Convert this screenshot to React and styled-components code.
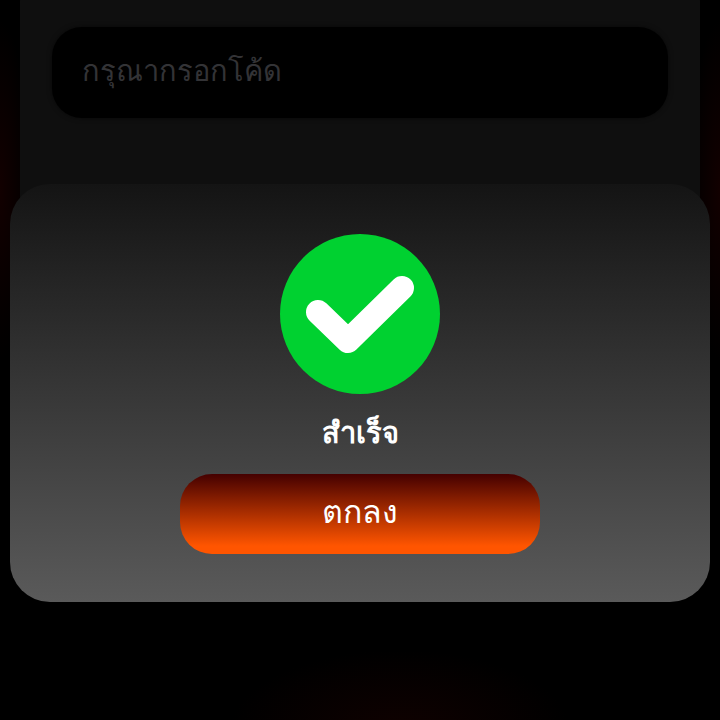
import React from 'react';
import styled, {createGlobalStyle} from 'styled-components';

const GlobalStyle = createGlobalStyle`
    html, body {
        margin: 0;
        padding: 0;
        background: #000;
    }
    body {
        font-family: "Noto Sans", "Open Sans", "DejaVu Sans", sans-serif;
    }
`

function App() {
    return (
        <Page>
            <GlobalStyle />
            <Panel>
                <CodeInput placeholder="กรุณากรอกโค้ด" readOnly />
            </Panel>
            <Dialog>
                <CheckCircle>
                    <svg width="160" height="160" viewBox="0 0 160 160">
                        <path d="M38 78 L68 107 L122 54" fill="none" stroke="#fff" strokeWidth="24" strokeLinecap="round" strokeLinejoin="round" />
                    </svg>
                </CheckCircle>
                <Title>สำเร็จ</Title>
                <OkButton>ตกลง</OkButton>
            </Dialog>
        </Page>
    );
}

const Page = styled.div`
    position: relative;
    width: 720px;
    height: 720px;
    overflow: hidden;
    box-sizing: border-box;
    padding: 0 20px;
    background:
        radial-gradient(ellipse 170px 80px at 400px 730px, #0f0100 0%, rgba(15, 1, 0, 0) 100%),
        radial-gradient(ellipse 30px 170px at 0px 190px, #120000 0%, rgba(18, 0, 0, 0) 100%),
        radial-gradient(ellipse 30px 170px at 720px 190px, #120000 0%, rgba(18, 0, 0, 0) 100%),
        #000;
`

const Panel = styled.div`
    height: 340px;
    margin-top: -30px;
    box-sizing: border-box;
    padding: 57px 32px 0;
    border-radius: 32px;
    background: #0f0f0f;
`

const CodeInput = styled.input`
    display: block;
    width: 100%;
    height: 91px;
    box-sizing: border-box;
    padding: 0 30px 6px;
    border: none;
    outline: none;
    border-radius: 30px;
    background: #000;
    box-shadow: 0 0 5px rgba(0, 0, 0, 0.5);
    color: #fff;
    font-family: inherit;
    font-size: 29px;
    &::placeholder {
        color: #333336;
        opacity: 1;
    }
`

const Dialog = styled.div`
    position: absolute;
    top: 184px;
    left: 10px;
    width: 700px;
    height: 418px;
    box-sizing: border-box;
    padding-top: 50px;
    display: flex;
    flex-direction: column;
    align-items: center;
    border-radius: 40px;
    background: linear-gradient(180deg, #141414 0%, #5a5a5a 100%);
`

const CheckCircle = styled.div`
    width: 160px;
    height: 160px;
    border-radius: 50%;
    background: #00d130;
    svg {
        display: block;
    }
`

const Title = styled.div`
    margin-top: 12px;
    margin-bottom: 2px;
    height: 52px;
    line-height: 52px;
    color: #fff;
    font-size: 29px;
    font-weight: 700;
`

const OkButton = styled.button`
    width: 360px;
    height: 80px;
    margin-top: 14px;
    padding: 0 0 6px;
    border: none;
    border-radius: 32px;
    background: linear-gradient(180deg, #450000 0%, #ff5500 90%);
    color: #fff;
    font-family: inherit;
    font-size: 32px;
    font-weight: 400;
`

export default App
